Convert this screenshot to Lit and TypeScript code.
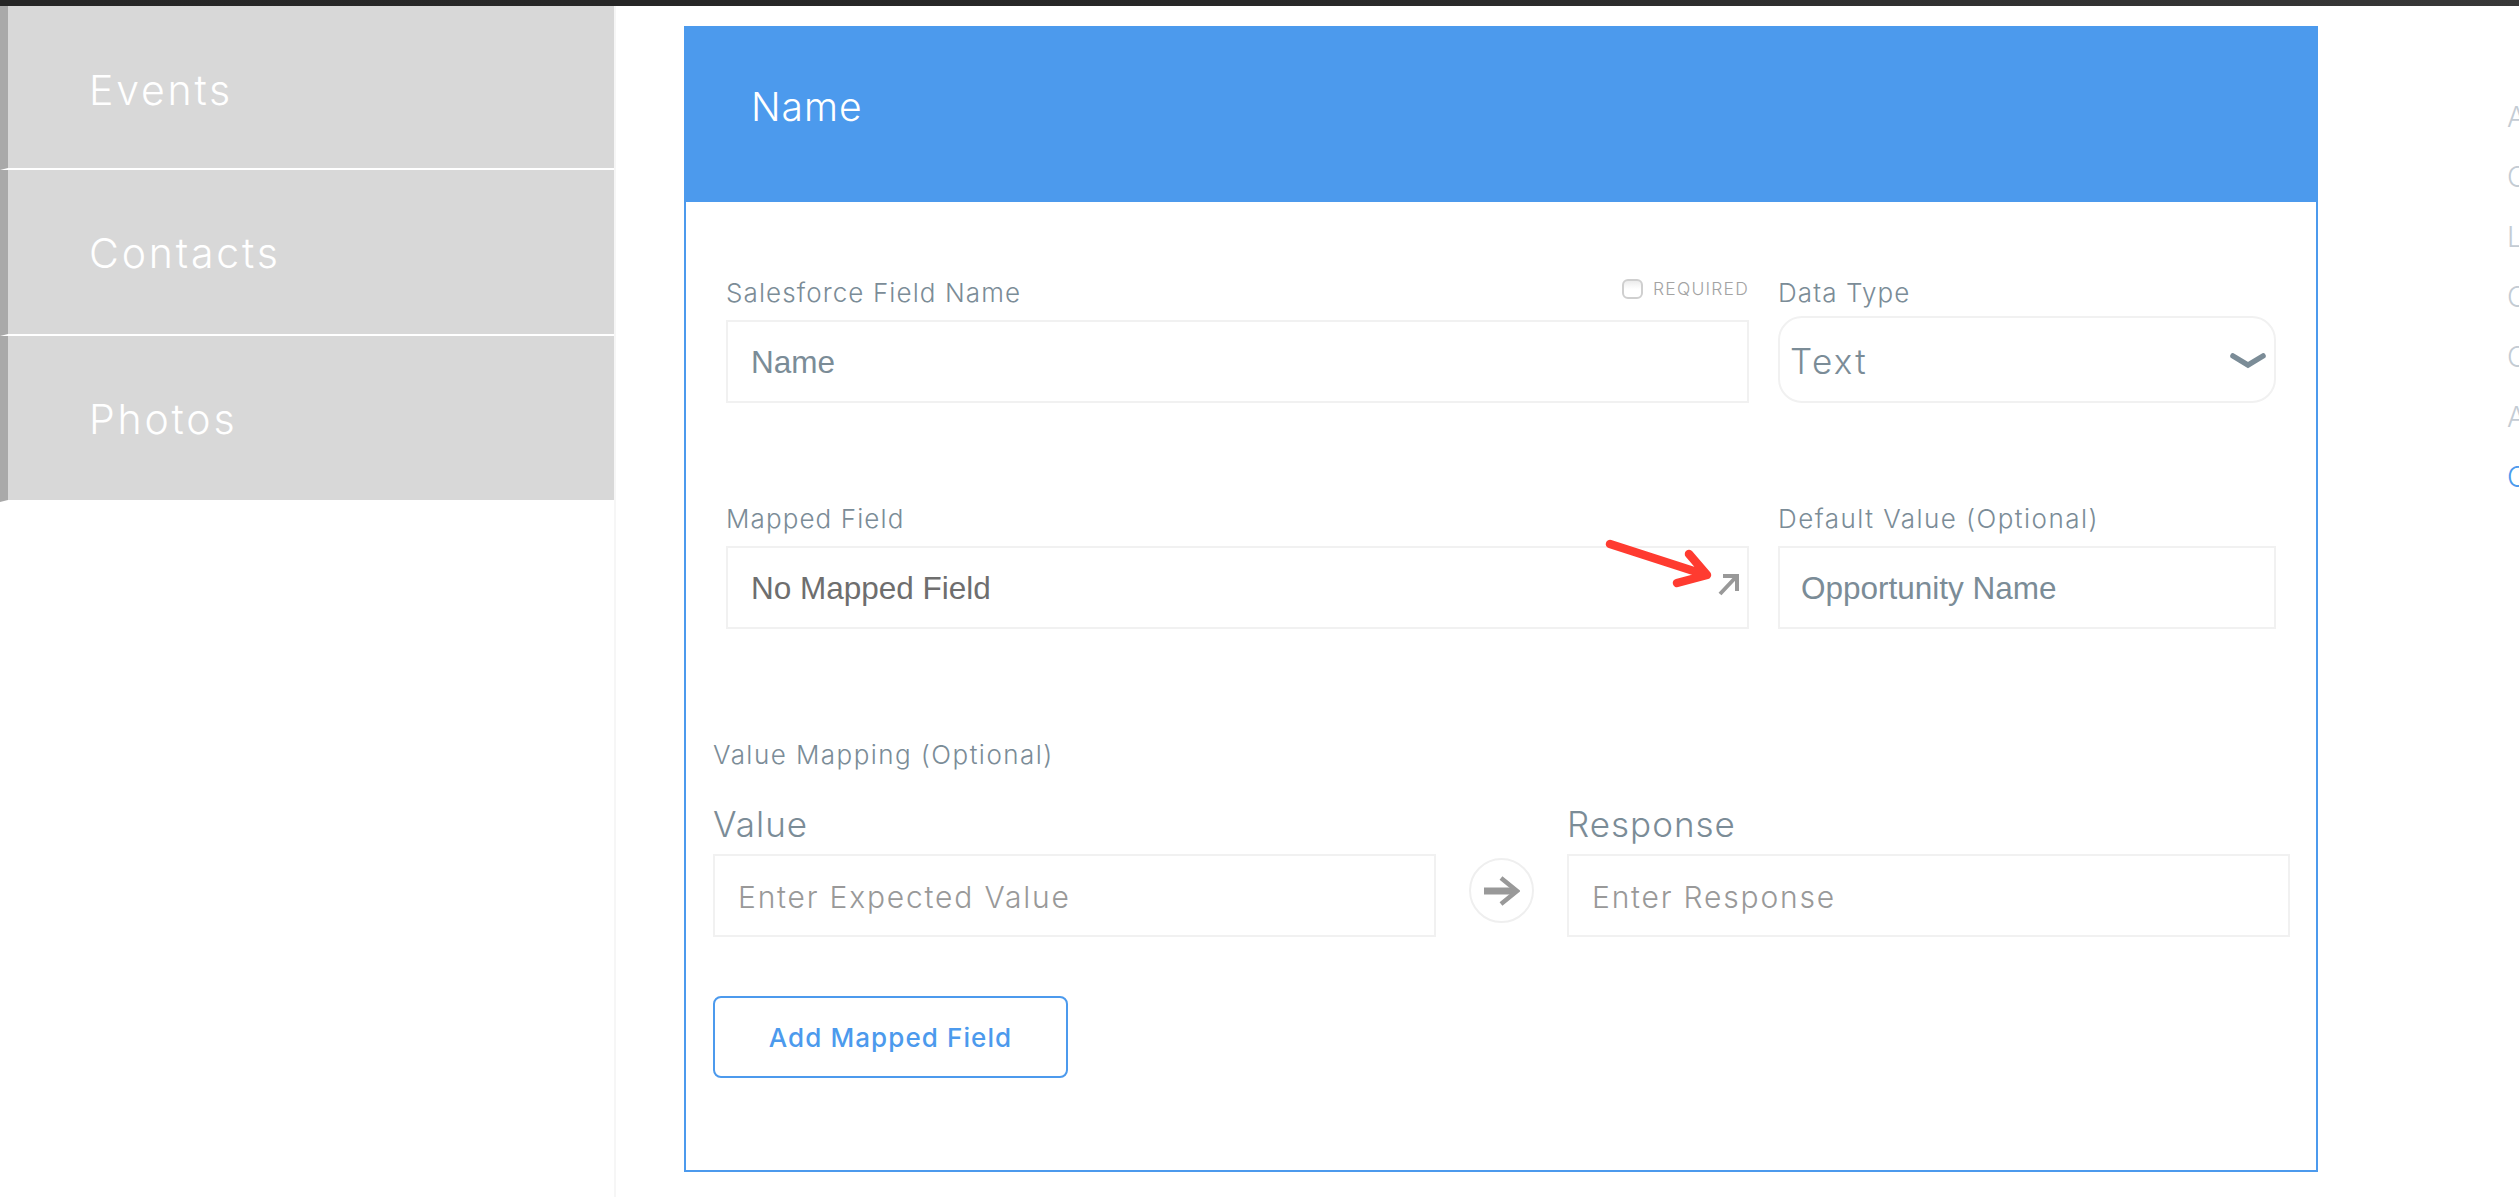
import { LitElement, html, css } from "lit";
import { customElement } from "lit/decorators.js";

@customElement("app-root")
export class AppRoot extends LitElement {
  static styles = css`
    :host { display: block; width: 2519px; height: 1197px; overflow: hidden; background: #fff; font-family: Inter, "Noto Sans", sans-serif; font-weight: 300; color: #7b8c97; }
    * { box-sizing: border-box; }
    .topbar { position: relative; z-index: 1; height: 6px; background: linear-gradient(90deg, #262626, #282828 50%, #383838); }
    .page { display: flex; height: 1191px; }
    .sidebar { flex: none; width: 616px; border-right: 2px solid #f6f6f6; margin-top: -2px; }
    .item { height: 166px; display: flex; align-items: center; padding-left: 81px; background: #d8d8d8; background-clip: padding-box; border-left: 8px solid #a9a9a9; border-bottom: 2px solid #fff; color: #fff; font-size: 41px; letter-spacing: 2.8px; font-weight: 300; }
    .item span { display: block; padding-top: 2px; }
    .item:first-child span { padding-top: 8px; }
    .card { flex: none; width: 1634px; margin: 20px 0 0 68px; height: 1146px; display: flex; flex-direction: column; }
    .head { height: 176px; flex: none; background: #4c9aed; color: #fff; display: flex; align-items: center; padding: 0 0 16px 67px; font-size: 39px; font-weight: 300; letter-spacing: 1px; }
    .body { flex: 1; border: 2px solid #4c9aed; border-top: 0; padding-top: 74px; }
    .row { display: grid; grid-template-columns: 1023px 498px; column-gap: 29px; padding-left: 40px; align-items: end; }
    .row.second { margin-top: 99px; }
    .label-line { display: flex; justify-content: space-between; align-items: flex-start; height: 32px; margin-bottom: 12px; }
    .label { display: block; height: 32px; font-size: 26px; line-height: 34px; letter-spacing: 1.1px; white-space: nowrap; }
    .label.wide { letter-spacing: 1.45px; }
    .req { display: flex; align-items: center; gap: 10px; font-size: 17.5px; line-height: 20px; letter-spacing: 1.2px; color: #a3a3a3; margin-top: 3px; }
    .check { width: 21px; height: 20px; border: 2px solid #cfcfcf; border-radius: 6px; background: linear-gradient(#ececec, #fff 50%); }
    .box { position: relative; height: 83px; border: 2px solid #f1f1f1; display: flex; align-items: center; padding: 2px 0 0 23px; font-family: "Liberation Sans", Arial, sans-serif; font-weight: 400; font-size: 31.5px; color: #7b8c97; white-space: nowrap; }
    .box.dark { color: #6e6e6e; }
    .box.default { padding-left: 21px; }
    .select { height: 87px; border-radius: 24px; padding: 2px 8px 0 10px; justify-content: space-between; font-family: Inter, sans-serif; font-weight: 300; font-size: 35px; letter-spacing: 2.4px; margin-top: -4px; }
    .select svg { display: block; }
    .gray-arrow { position: absolute; left: 987px; top: 23px; }
    .red-arrow { position: absolute; left: 874px; top: -11px; }
    .mapping { padding-left: 27px; margin-top: 109px; }
    .values { display: grid; grid-template-columns: 723px 65px 723px; column-gap: 33px; margin-top: 34px; align-items: end; }
    .sub { font-size: 35px; line-height: 40px; margin-bottom: 10px; letter-spacing: 1px; }
    .ph { font-family: Inter, sans-serif; font-weight: 300; color: #999; font-size: 30px; letter-spacing: 1.8px; }
    .circle { width: 65px; height: 65px; border: 2px solid #efefef; border-radius: 50%; display: flex; align-items: center; justify-content: center; margin-bottom: 14px; }
    .btn { width: 355px; height: 82px; margin-top: 59px; border: 2px solid #4c9aed; border-radius: 8px; display: flex; align-items: center; justify-content: center; color: #4c9aed; font-size: 26px; font-weight: 500; letter-spacing: 1.1px; }
    .nav { flex: none; margin: 91px 0 0 189px; width: 12px; overflow: hidden; display: flex; flex-direction: column; gap: 20px; }
    .nav span { height: 40px; line-height: 40px; font-size: 28px; color: #c4ccd4; }
    .nav span.on { color: #4c9aed; }
  `;

  render() {
    return html`
      <div class="topbar"></div>
      <div class="page">
        <aside class="sidebar">
          ${["Events", "Contacts", "Photos"].map((t) => html`<div class="item"><span>${t}</span></div>`)}
        </aside>
        <section class="card">
          <div class="head">Name</div>
          <div class="body">
            <div class="row">
              <div>
                <div class="label-line">
                  <span class="label">Salesforce Field Name</span>
                  <span class="req"><span class="check"></span>REQUIRED</span>
                </div>
                <div class="box">Name</div>
              </div>
              <div>
                <div class="label-line"><span class="label">Data Type</span></div>
                <div class="box select">
                  <span>Text</span>
                  <svg width="36" height="16" viewBox="0 0 36 16"><path d="M3 3 L18 12 L33 3" fill="none" stroke="#7b8c97" stroke-width="5.5" stroke-linecap="round" stroke-linejoin="miter"/></svg>
                </div>
              </div>
            </div>
            <div class="row second">
              <div>
                <div class="label-line"><span class="label">Mapped Field</span></div>
                <div class="box dark">
                  No Mapped Field
                  <svg class="gray-arrow" width="28" height="28" viewBox="0 0 28 28"><path d="M5 23 L21 6 M8 5 H22 V20" fill="none" stroke="#999" stroke-width="4"/></svg>
                  <svg class="red-arrow" width="120" height="60" viewBox="0 0 120 60"><path d="M8 7 L104 38 M87 17 L105 38 L75 46" fill="none" stroke="#ff3b30" stroke-width="8.5" stroke-linecap="round" stroke-linejoin="round"/></svg>
                </div>
              </div>
              <div>
                <div class="label-line"><span class="label wide">Default Value (Optional)</span></div>
                <div class="box default">Opportunity Name</div>
              </div>
            </div>
            <div class="mapping">
              <div class="label wide">Value Mapping (Optional)</div>
              <div class="values">
                <div>
                  <div class="sub">Value</div>
                  <div class="box ph">Enter Expected Value</div>
                </div>
                <div class="circle">
                  <svg width="36" height="30" viewBox="0 0 36 30"><path d="M0 15 H30" stroke="#999" stroke-width="7" fill="none"/><path d="M17 2 L33 15 L17 28" stroke="#999" stroke-width="4.5" fill="none"/></svg>
                </div>
                <div>
                  <div class="sub">Response</div>
                  <div class="box ph">Enter Response</div>
                </div>
              </div>
              <div class="btn">Add Mapped Field</div>
            </div>
          </div>
        </section>
        <nav class="nav">
          <span>A</span><span>C</span><span>L</span><span>C</span><span>C</span><span>A</span><span class="on">C</span>
        </nav>
      </div>
    `;
  }
}
